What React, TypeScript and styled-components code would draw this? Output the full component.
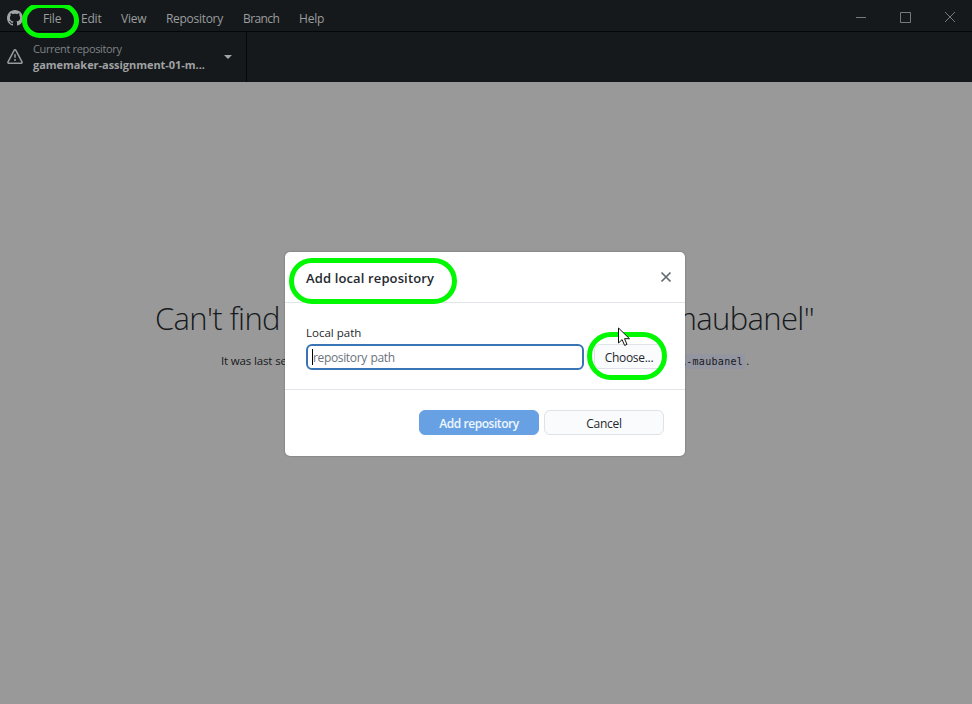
import React from "react";
import styled, { createGlobalStyle, css } from "styled-components";

const Global = createGlobalStyle`
  * { box-sizing: border-box; }
  body { margin: 0; font-family: "Open Sans", "Noto Sans", sans-serif; font-size: 12px; overflow: hidden; }
`;

const Window = styled.div`
  position: relative;
  display: flex;
  flex-direction: column;
  width: 972px;
  height: 704px;
  background: #999999;
`;

const TitleBar = styled.header`
  display: flex;
  align-items: center;
  height: 32px;
  padding-left: 7px;
  background: #15191c;
  border-bottom: 1px solid #050607;
  color: #9b9d9e;
`;

const Menu = styled.nav`
  display: flex;
  flex: 1;
  margin-left: 20px;
  padding-top: 6px;
  height: 31px;
`;

const MenuItem = styled.span<{ $width: number; $spacing?: number }>`
  width: ${(p) => p.$width}px;
  line-height: 25px;
  white-space: nowrap;
  letter-spacing: ${(p) => p.$spacing ?? -0.2}px;
`;

const WindowControls = styled.div`
  display: flex;
  width: 133px;
  height: 31px;
  padding-top: 3px;
  color: #77797b;
`;

const Control = styled.span`
  display: flex;
  flex: 1;
  align-items: center;
  justify-content: center;
`;

const Toolbar = styled.div`
  display: flex;
  height: 50px;
  background: #15191c;
`;

const RepoButton = styled.div`
  display: flex;
  align-items: center;
  width: 247px;
  padding: 0 14px 0 7px;
  border-right: 1px solid #050607;
`;

const RepoText = styled.div`
  display: flex;
  flex: 1;
  flex-direction: column;
  margin: -1px 0 0 10px;
  line-height: 16px;
  white-space: nowrap;
`;

const RepoLabel = styled.span`
  color: #7f8386;
  font-size: 11px;
  letter-spacing: -0.35px;
`;

const RepoName = styled.span`
  color: #a0a2a3;
  font-size: 11px;
  font-weight: 700;
  letter-spacing: -0.04px;
`;

const Main = styled.main`
  display: flex;
  flex: 1;
  flex-direction: column;
  align-items: center;
  padding-top: 212px;
  color: #17191c;
`;

const Headline = styled.h1`
  display: flex;
  justify-content: space-between;
  width: 662px;
  height: 48px;
  margin: 0;
  padding-right: 3px;
  font-size: 31px;
  font-weight: 300;
  line-height: 48px;
  letter-spacing: -0.65px;
  white-space: nowrap;
`;

const Details = styled.p`
  display: flex;
  justify-content: space-between;
  width: 530px;
  margin: 10px 0 0;
  padding-right: 2px;
  font-size: 11.5px;
  line-height: 18px;
  letter-spacing: -0.15px;
`;

const Path = styled.code`
  margin-right: 1px;
  padding: 2px 2px 2px 0;
  background: #9395a0;
  font-family: "DejaVu Sans Mono", monospace;
  font-size: 10px;
  letter-spacing: 0.3px;
`;

const Dialog = styled.section`
  position: absolute;
  top: 252px;
  left: 285px;
  display: flex;
  flex-direction: column;
  width: 400px;
  height: 204px;
  background: #fff;
  border-radius: 5px;
  box-shadow: 0 0 2px rgba(0, 0, 0, 0.35);
  color: #24292e;
`;

const DialogHeader = styled.div`
  display: flex;
  justify-content: space-between;
  align-items: center;
  height: 51px;
  padding: 0 13px 0 21px;
  border-bottom: 1px solid #e1e4e8;
`;

const DialogTitle = styled.h2`
  margin: 2px 0 0;
  font-size: 13px;
  font-weight: 600;
  letter-spacing: 0.13px;
`;

const DialogBody = styled.div`
  display: flex;
  flex-direction: column;
  height: 87px;
  padding: 21px 21px 0;
  border-bottom: 1px solid #e1e4e8;
`;

const FieldLabel = styled.label`
  height: 20px;
  line-height: 18px;
  font-size: 11.5px;
`;

const FieldRow = styled.div`
  display: flex;
  gap: 10px;
`;

const PathField = styled.div`
  display: flex;
  align-items: center;
  width: 278px;
  height: 26px;
  padding: 1px 0 0 4px;
  border: 2px solid #3a74b4;
  border-radius: 6px;
  color: #6a737d;
  font-size: 12px;
  letter-spacing: -0.35px;
  word-spacing: 0.8px;
`;

const Caret = styled.i`
  width: 1px;
  height: 16px;
  margin-top: -2px;
  background: #000;
`;

const Button = styled.button<{ $primary?: boolean; $width: number }>`
  width: ${(p) => p.$width}px;
  height: 25px;
  padding: 2px 0 0;
  border: 1px solid #dfe2e8;
  border-radius: 6px;
  background: #fafbfc;
  color: #24292e;
  font: 12px/20px "Open Sans", sans-serif;
  letter-spacing: -0.3px;
  ${(p) =>
    p.$primary &&
    css`
      border-color: #68a1e3;
      background: #68a1e3;
      color: #eef7ff;
      font-weight: 600;
      letter-spacing: -0.45px;
    `}
`;

const DialogFooter = styled.div`
  display: flex;
  justify-content: flex-end;
  gap: 5px;
  padding: 20px 21px 0;
`;

const Ring = styled.div<{ $x: number; $y: number; $w: number; $h: number; $cut?: boolean }>`
  position: absolute;
  left: ${(p) => p.$x}px;
  top: ${(p) => p.$y}px;
  width: ${(p) => p.$w}px;
  height: ${(p) => p.$h}px;
  border: 5px solid #00f800;
  border-radius: 24px;
  ${(p) =>
    p.$cut &&
    css`
      border-radius: 18px;
      clip-path: inset(2px 0 0 0);
    `}
`;

const Pointer = styled.svg`
  position: absolute;
  left: 618px;
  top: 327px;
`;

const LogoSlot = styled.span`
  display: flex;
  padding-top: 4px;
`;

const OctocatIcon = () => (
  <svg width="16" height="16" viewBox="0 0 16 16" fill="#a3a5a6">
    <path d="M8 0C3.58 0 0 3.58 0 8c0 3.54 2.29 6.53 5.47 7.59.4.07.55-.17.55-.38 0-.19-.01-.82-.01-1.49-2.01.37-2.53-.49-2.69-.94-.09-.23-.48-.94-.82-1.13-.28-.15-.68-.52-.01-.53.63-.01 1.08.58 1.23.82.72 1.21 1.87.87 2.33.66.07-.52.28-.87.51-1.07-1.78-.2-3.64-.89-3.64-3.95 0-.87.31-1.59.82-2.15-.08-.2-.36-1.02.08-2.12 0 0 .67-.21 2.2.82.64-.18 1.32-.27 2-.27s1.36.09 2 .27c1.53-1.04 2.2-.82 2.2-.82.44 1.1.16 1.92.08 2.12.51.56.82 1.27.82 2.15 0 3.07-1.87 3.75-3.65 3.95.29.25.54.73.54 1.48 0 1.07-.01 1.93-.01 2.2 0 .21.15.46.55.38A8.01 8.01 0 0 0 16 8c0-4.42-3.58-8-8-8z" />
  </svg>
);

const AlertIcon = () => (
  <svg width="16" height="16" viewBox="0 0 16 16" fill="#999b9d">
    <path d="M8.22 1.754a.25.25 0 0 0-.44 0L1.698 13.132a.25.25 0 0 0 .22.368h12.164a.25.25 0 0 0 .22-.368L8.22 1.754zm-1.763-.707c.659-1.234 2.427-1.234 3.086 0l6.082 11.378A1.75 1.75 0 0 1 14.082 15H1.918a1.75 1.75 0 0 1-1.543-2.575L6.457 1.047zM9 11a1 1 0 1 1-2 0 1 1 0 0 1 2 0zm-.25-5.25a.75.75 0 0 0-1.5 0v2.5a.75.75 0 0 0 1.5 0v-2.5z" />
  </svg>
);

export default function App() {
  return (
    <>
      <Global />
      <Window>
        <TitleBar>
          <LogoSlot>
            <OctocatIcon />
          </LogoSlot>
          <Menu>
            <MenuItem $width={38}>File</MenuItem>
            <MenuItem $width={40}>Edit</MenuItem>
            <MenuItem $width={45}>View</MenuItem>
            <MenuItem $width={77} $spacing={-0.3}>Repository</MenuItem>
            <MenuItem $width={56} $spacing={-0.6}>Branch</MenuItem>
            <MenuItem $width={40}>Help</MenuItem>
          </Menu>
          <WindowControls>
            <Control>
              <svg width="10" height="10" stroke="currentColor"><path d="M0 5.5h10" /></svg>
            </Control>
            <Control>
              <svg width="11" height="11" fill="none" stroke="currentColor"><path d="M.5.5h10v10H.5z" /></svg>
            </Control>
            <Control>
              <svg width="10" height="10" stroke="currentColor"><path d="M0 0l10 10M10 0L0 10" /></svg>
            </Control>
          </WindowControls>
        </TitleBar>
        <Toolbar>
          <RepoButton>
            <AlertIcon />
            <RepoText>
              <RepoLabel>Current repository</RepoLabel>
              <RepoName>gamemaker-assignment-01-m...</RepoName>
            </RepoText>
            <svg width="8" height="4" fill="#a3a5a6"><path d="M0 0h8L4 4z" /></svg>
          </RepoButton>
        </Toolbar>
        <Main>
          <Headline>
            <span>Can't find</span>
            <span>"gamemaker-assignment-01-maubanel"</span>
          </Headline>
          <Details>
            <span>It was last seen at</span>
            <span>
              <Path>gamemaker-assignment-01-maubanel</Path>.
            </span>
          </Details>
        </Main>
        <Dialog>
          <DialogHeader>
            <DialogTitle>Add local repository</DialogTitle>
            <svg width="12" height="12" stroke="#626a72" strokeWidth="1.7">
              <path d="M1.5 1.5l9 9M10.5 1.5l-9 9" />
            </svg>
          </DialogHeader>
          <DialogBody>
            <FieldLabel>Local path</FieldLabel>
            <FieldRow>
              <PathField><Caret />repository path</PathField>
              <Button $width={70}>Choose...</Button>
            </FieldRow>
          </DialogBody>
          <DialogFooter>
            <Button $primary $width={120}>Add repository</Button>
            <Button $width={120}>Cancel</Button>
          </DialogFooter>
        </Dialog>
        <Ring $x={22} $y={3} $w={57} $h={35} $cut />
        <Ring $x={289} $y={258} $w={168} $h={46} />
        <Ring $x={587} $y={332} $w={80} $h={48} />
        <Pointer width="13" height="20" viewBox="0 0 13 20">
          <path d="M.5 1v15l3.6-3.4 2.5 5.8 2.4-1-2.5-5.7h5z" fill="#fff" stroke="#111" />
        </Pointer>
      </Window>
    </>
  );
}
